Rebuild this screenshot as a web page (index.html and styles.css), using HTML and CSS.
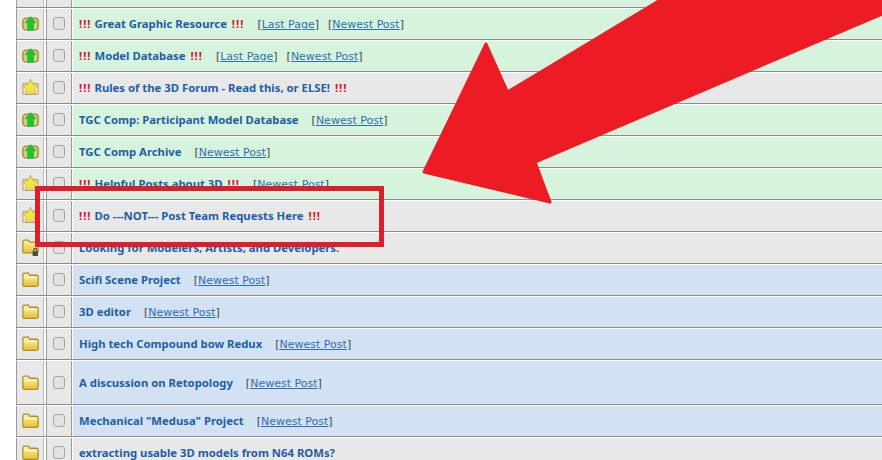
FILE: index.html
```html
<!DOCTYPE html>
<html lang="en">
<head>
<meta charset="utf-8">
<title>3D Forum</title>
<link rel="stylesheet" href="styles.css">
</head>
<body>
<svg width="0" height="0" class="defs">
<defs>
<linearGradient id="gold" x1="0" y1="0" x2="0" y2="1">
<stop offset="0" stop-color="#fff6b0"/>
<stop offset="1" stop-color="#e6bf2c"/>
</linearGradient>
<symbol id="i-folder" viewBox="0 0 16 16">
<path d="M.8 13V3.500Q.8 2 2.300 2H6l1.500 2h6Q15.200 4 15.200 5.500V13Q15.200 14.500 13.500 14.500h-11Q.8 14.500 .8 13Z" fill="url(#gold)" stroke="#a8912c" stroke-width="1.200"/>
<path d="M1.800 6.300h12.400" stroke="#fffbe0" stroke-width="1"/>
</symbol>
<symbol id="i-star" viewBox="0 0 16 16">
<path d="M.8 12.500V5.500Q.8 4 2.300 4H13.500Q15.200 4 15.200 5.500V12.500Q15.200 14.500 13.500 14.500h-11Q.8 14.500 .8 12.500Z" fill="#efe9c4" stroke="#b0a478" stroke-width="1"/>
<path d="M8 .2l2.400 5 5.300.7-3.900 3.600 1 5.300L8 12.200l-4.800 2.600 1-5.300L.3 5.900l5.300-.7Z" fill="#f8e23e" stroke="#bcae60" stroke-width=".8"/>
</symbol>
<symbol id="i-hot" viewBox="0 0 16 16">
<rect x=".8" y="3" width="14.400" height="11" rx="3" fill="#d9cc80" stroke="#9a8526" stroke-width="1.200"/>
<path d="M8 1.500l5.200 5.800h-2.400v7.200H5.200V7.300H2.800Z" fill="#14c82c" stroke="#10a824" stroke-width=".4" stroke-linejoin="round"/>
</symbol>
<symbol id="i-lock" viewBox="0 0 16 16">
<path d="M.8 11.500V2.500Q.8 1 2.300 1H6l1.500 2h6Q15.200 3 15.200 4.500V11.500Q15.200 13 13.500 13h-11Q.8 13 .8 11.500Z" fill="url(#gold)" stroke="#a8912c" stroke-width="1.200"/>
<rect x="10" y="11.500" width="5" height="4.500" fill="#4a4a4a"/>
<path d="M11 11.500V10.300a1.500 1.500 0 0 1 3 0V11.500" fill="none" stroke="#4a4a4a" stroke-width="1"/>
</symbol>
</defs>
</svg>
<main class="board">
<div class="row row-stub row-green"><div class="c-icon"></div><div class="c-check"></div><div class="c-title"></div></div>

<div class="row row-green"><div class="c-icon"><svg class="ico"><use href="#i-hot"/></svg></div><div class="c-check"><span class="box"></span></div><div class="c-title"><span><b class="alert">!!!</b> <a class="topic">Great Graphic Resource</a> <b class="alert alert-end">!!!</b></span><span class="links"><span class="pg">[<a>Last Page</a>]</span><span class="pg">[<a>Newest Post</a>]</span></span></div></div>

<div class="row row-green"><div class="c-icon"><svg class="ico"><use href="#i-hot"/></svg></div><div class="c-check"><span class="box"></span></div><div class="c-title"><span><b class="alert">!!!</b> <a class="topic">Model Database</a> <b class="alert alert-end">!!!</b></span><span class="links"><span class="pg">[<a>Last Page</a>]</span><span class="pg">[<a>Newest Post</a>]</span></span></div></div>

<div class="row row-gray"><div class="c-icon"><svg class="ico"><use href="#i-star"/></svg></div><div class="c-check"><span class="box"></span></div><div class="c-title"><span><b class="alert">!!!</b> <a class="topic">Rules of the 3D Forum - Read this, or ELSE!</a> <b class="alert alert-end">!!!</b></span></div></div>

<div class="row row-green"><div class="c-icon"><svg class="ico"><use href="#i-hot"/></svg></div><div class="c-check"><span class="box"></span></div><div class="c-title"><a class="topic">TGC Comp: Participant Model Database</a><span class="links"><span class="pg">[<a>Newest Post</a>]</span></span></div></div>

<div class="row row-green"><div class="c-icon"><svg class="ico"><use href="#i-hot"/></svg></div><div class="c-check"><span class="box"></span></div><div class="c-title"><a class="topic">TGC Comp Archive</a><span class="links"><span class="pg">[<a>Newest Post</a>]</span></span></div></div>

<div class="row row-green"><div class="c-icon"><svg class="ico"><use href="#i-star"/></svg></div><div class="c-check"><span class="box"></span></div><div class="c-title"><span><b class="alert">!!!</b> <a class="topic">Helpful Posts about 3D</a> <b class="alert alert-end">!!!</b></span><span class="links"><span class="pg">[<a>Newest Post</a>]</span></span></div></div>

<div class="row row-gray"><div class="c-icon"><svg class="ico"><use href="#i-star"/></svg></div><div class="c-check"><span class="box"></span></div><div class="c-title"><span><b class="alert">!!!</b> <a class="topic">Do ---NOT--- Post Team Requests Here</a> <b class="alert alert-end">!!!</b></span></div></div>

<div class="row row-gray"><div class="c-icon"><svg class="ico"><use href="#i-lock"/></svg></div><div class="c-check"><span class="box"></span></div><div class="c-title"><a class="topic">Looking for Modelers, Artists, and Developers.</a></div></div>

<div class="row row-blue"><div class="c-icon"><svg class="ico"><use href="#i-folder"/></svg></div><div class="c-check"><span class="box"></span></div><div class="c-title"><a class="topic">Scifi Scene Project</a><span class="links"><span class="pg">[<a>Newest Post</a>]</span></span></div></div>

<div class="row row-blue"><div class="c-icon"><svg class="ico"><use href="#i-folder"/></svg></div><div class="c-check"><span class="box"></span></div><div class="c-title"><a class="topic">3D editor</a><span class="links"><span class="pg">[<a>Newest Post</a>]</span></span></div></div>

<div class="row row-blue"><div class="c-icon"><svg class="ico"><use href="#i-folder"/></svg></div><div class="c-check"><span class="box"></span></div><div class="c-title"><a class="topic">High tech Compound bow Redux</a><span class="links"><span class="pg">[<a>Newest Post</a>]</span></span></div></div>

<div class="row row-blue row-tall"><div class="c-icon"><svg class="ico"><use href="#i-folder"/></svg></div><div class="c-check"><span class="box"></span></div><div class="c-title"><a class="topic">A discussion on Retopology</a><span class="links"><span class="pg">[<a>Newest Post</a>]</span></span></div></div>

<div class="row row-blue"><div class="c-icon"><svg class="ico"><use href="#i-folder"/></svg></div><div class="c-check"><span class="box"></span></div><div class="c-title"><a class="topic">Mechanical "Medusa" Project</a><span class="links"><span class="pg">[<a>Newest Post</a>]</span></span></div></div>

<div class="row row-gray"><div class="c-icon"><svg class="ico"><use href="#i-folder"/></svg></div><div class="c-check"><span class="box"></span></div><div class="c-title"><a class="topic">extracting usable 3D models from N64 ROMs?</a></div></div>
</main>
<svg class="arrow" width="882" height="460" viewBox="0 0 882 460">
<path d="M667 -4L882 -4V14L535 162L550 202L424 172L486 44L507.500 92Z" fill="#ed1c24" stroke="#ed1c24" stroke-width="3" stroke-linejoin="round"/>
</svg>
<div class="callout"></div>
</body>
</html>
```
FILE: styles.css
```css
html, body {
  margin: 0;
  padding: 0;
  background: #fff;
}
body {
  width: 882px;
  height: 460px;
  overflow: hidden;
  position: relative;
}
.defs {
  position: absolute;
}
.board {
  margin-left: 16px;
  font-family: "Noto Sans", sans-serif;
  font-size: 11.3px;
}
.row {
  display: grid;
  grid-template-columns: 29px 26px 1fr;
  height: 32px;
  box-sizing: border-box;
  border-bottom: 1px solid #8c8c8c;
  border-top: 1px solid #fff;
  border-left: 1px solid #9a9a9a;
}
.row-stub {
  height: 8px;
  border-top: 0;
}
.row-tall {
  height: 45px;
}
.c-icon, .c-check {
  display: flex;
  align-items: center;
  justify-content: center;
  background: #e8e8e8;
  box-sizing: border-box;
  padding-bottom: 1px;
}
.c-icon {
  border-right: 2px solid #fff;
  box-shadow: inset -1px 0 0 #bcbcbc;
}
.c-check {
  border-left: 1px solid #9a9a9a;
  border-right: 1px solid #9a9a9a;
}
.c-title {
  display: flex;
  align-items: center;
  white-space: pre;
  padding-left: 6px;
  padding-bottom: 1px;
  border-left: 1px solid #fff;
}
.row-green .c-title { background: #d6f3dd; }
.row-gray .c-title { background: #e8e8e8; }
.row-blue .c-title { background: #d2e2f2; }
.ico {
  width: 17px;
  height: 17px;
}
.box {
  width: 10px;
  height: 11px;
  border: 1px solid #a5a5a5;
  border-radius: 3px;
  background: #e2e2e2;
}
.alert {
  color: #d8102a;
  font-weight: 700;
  letter-spacing: 1px;
}
.alert-end {
  margin-left: 2px;
}
.topic {
  color: #1d5ea6;
  font-weight: 700;
}
.links {
  margin-left: 13px;
  padding-top: 2px;
  color: #444;
  display: flex;
  gap: 9px;
  font-family: "DejaVu Sans", sans-serif;
  font-size: 11px;
}
.pg a {
  color: #2f6fb0;
  text-decoration: underline;
}
.arrow {
  position: absolute;
  left: 0;
  top: 0;
  pointer-events: none;
}
.callout {
  position: absolute;
  left: 35px;
  top: 186px;
  width: 349px;
  height: 61px;
  box-sizing: border-box;
  border: 5px solid #db1f2d;
}
```
